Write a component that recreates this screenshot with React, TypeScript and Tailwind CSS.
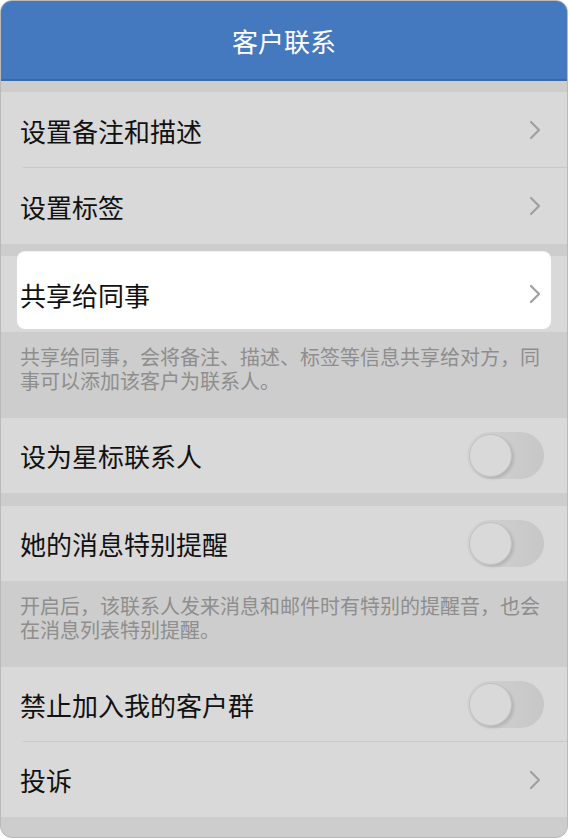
const font = { fontFamily: '"Noto Sans CJK SC", "Noto Sans", sans-serif' };

function Chevron() {
  return (
    <svg width="12" height="20" viewBox="0 0 12 20" className="shrink-0">
      <path d="M2 2 L10 10 L2 18" fill="none" stroke="#a0a0a0" strokeWidth="2.2" strokeLinecap="round" strokeLinejoin="round" />
    </svg>
  );
}

function Toggle() {
  return (
    <div className="relative h-[47px] w-[77px] shrink-0 rounded-full bg-gradient-to-r from-[#d2d2d2] to-[#c7c7c7]">
      <div className="absolute left-[2px] top-[2px] h-[43px] w-[43px] rounded-full border border-[#c2c2c2] bg-[#d9d9d9] shadow-[2px_2px_3px_rgba(0,0,0,0.12)]" />
    </div>
  );
}

function Row({ label, right, divider, tall }: { label: string; right: "chevron" | "toggle"; divider?: boolean; tall?: boolean }) {
  return (
    <div
      className={
        "relative flex shrink-0 items-center justify-between bg-[#d9d9d9] pl-[19px] pr-[26px] " +
        (tall ? "h-[76px]" : "h-[75px]")
      }
    >
      <span className="text-[26px] text-[#111111]">{label}</span>
      {right === "chevron" ? <Chevron /> : <div className="-mr-[3px]"><Toggle /></div>}
      {divider && <div className="absolute bottom-0 left-[22px] right-0 h-px bg-[#c9c9c9]" />}
    </div>
  );
}

function Note({ text }: { text: string }) {
  return (
    <div className="h-[86px] shrink-0 bg-[#cdcdcd] px-[19px] pt-[13px] text-[20px] leading-[24px] text-[#8e8e8e]">
      {text}
    </div>
  );
}

export default function App() {
  return (
    <div className="h-[840px] w-[570px] bg-white" style={font}>
      <div className="flex h-[838px] w-[568px] flex-col overflow-hidden rounded-[12px] border border-[#b9b9b9] bg-[#cdcdcd]">
        <div className="flex h-[80px] shrink-0 items-center justify-center border-b-2 border-[#3a68a8] bg-[#4479c0]">
          <span className="text-[26px] text-white">客户联系</span>
        </div>

        <div className="h-[11px] shrink-0" />
        <Row label="设置备注和描述" right="chevron" divider tall />
        <Row label="设置标签" right="chevron" tall />

        <div className="h-[12px] shrink-0" />
        <div className="relative flex h-[76px] shrink-0 items-center justify-between bg-[#d9d9d9] pl-[19px] pr-[26px]">
          <div className="absolute -top-[5px] bottom-[3px] left-[16px] right-[16px] rounded-[8px] border-t border-[#efefef] bg-white" />
          <span className="relative text-[26px] text-[#111111]">共享给同事</span>
          <div className="relative">
            <Chevron />
          </div>
        </div>
        <Note text="共享给同事，会将备注、描述、标签等信息共享给对方，同事可以添加该客户为联系人。" />

        <Row label="设为星标联系人" right="toggle" />
        <div className="h-[13px] shrink-0" />
        <Row label="她的消息特别提醒" right="toggle" />
        <Note text="开启后，该联系人发来消息和邮件时有特别的提醒音，也会在消息列表特别提醒。" />

        <Row label="禁止加入我的客户群" right="toggle" divider />
        <Row label="投诉" right="chevron" />
        <div className="flex-1" />
      </div>
    </div>
  );
}
